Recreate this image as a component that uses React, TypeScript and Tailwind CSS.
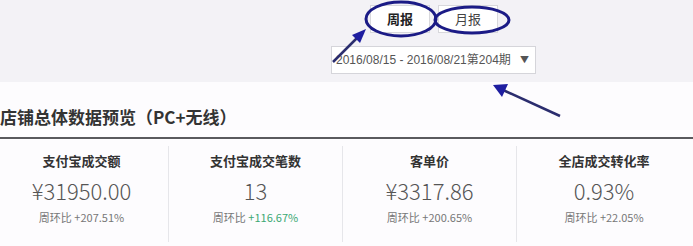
import React from 'react';

const stats = [
  { label: '支付宝成交额', value: '¥31950.00', change: '+207.51%', green: false },
  { label: '支付宝成交笔数', value: '13', change: '+116.67%', green: true },
  { label: '客单价', value: '¥3317.86', change: '+200.65%', green: false },
  { label: '全店成交转化率', value: '0.93%', change: '+22.05%', green: false },
];

const font = { fontFamily: '"Noto Sans CJK SC", "Noto Sans", sans-serif' };

export default function App() {
  return (
    <div className="relative w-[693px] h-[246px] overflow-hidden bg-[#fdfcfe] text-[#333]" style={font}>
      {/* top toolbar */}
      <div className="h-[82px] bg-[#f3f2f6] flex flex-col items-start pt-[5px]">
        <div className="flex gap-[8px] ml-[370px]">
          <button className="w-[60px] h-[28px] bg-white border border-[#d8d8dc] text-[13px] font-bold text-[#222]">周报</button>
          <button className="w-[60px] h-[28px] bg-white border border-[#d8d8dc] text-[13px] text-[#444]">月报</button>
        </div>
        <div className="mt-[13px] ml-[331px] w-[205px] h-[28px] bg-white border border-[#d5d5da] flex items-center justify-between pl-[4px] pr-[6px] text-[12px] text-[#555]">
          <span style={{ fontFamily: '"Liberation Sans", "Noto Sans CJK SC", sans-serif' }}>2016/08/15 - 2016/08/21第204期</span>
          <span className="text-[9px]">▼</span>
        </div>
      </div>

      {/* title */}
      <div className="pt-[24px]">
        <h2 className="text-[17px] font-bold leading-[22px] text-[#333]">店铺总体数据预览（PC+无线）</h2>
        <div className="mt-[9px] h-[2px] bg-[#5a5a5e] w-full" />
      </div>

      {/* stats */}
      <div className="-ml-[5px] w-[696px] grid grid-cols-4 mt-[7px]">
        {stats.map((s, i) => (
          <div key={i} className={`h-[96px] flex flex-col items-center pt-[5px] ${i < 3 ? 'border-r border-[#e6e6ea]' : ''}`}>
            <div className="text-[13px] font-bold text-[#333] leading-[20px]">{s.label}</div>
            <div className="text-[22px] font-light text-[#555] leading-[32px] mt-[3px]">{s.value}</div>
            <div className="text-[11px] text-[#777] leading-[16px] mt-[3px]">
              周环比 <span className={s.green ? 'text-[#3aa874]' : ''}>{s.change}</span>
            </div>
          </div>
        ))}
      </div>

      {/* annotations */}
      <svg className="absolute inset-0 pointer-events-none" width="693" height="246">
        <ellipse cx="401" cy="19" rx="35" ry="17" fill="none" stroke="#1b1b86" strokeWidth="3" />
        <ellipse cx="472" cy="20" rx="37" ry="13" fill="none" stroke="#1b1b86" strokeWidth="3" />
        <line x1="333" y1="62" x2="358" y2="37" stroke="#2b2d6e" strokeWidth="2.5" />
        <polygon points="366,29 352,35 360,43" fill="#1e1ea0" />
        <line x1="560" y1="116" x2="503" y2="90" stroke="#2b2d6e" strokeWidth="2.5" />
        <polygon points="493,85 508,84 502,97" fill="#1e1ea0" />
      </svg>
    </div>
  );
}
